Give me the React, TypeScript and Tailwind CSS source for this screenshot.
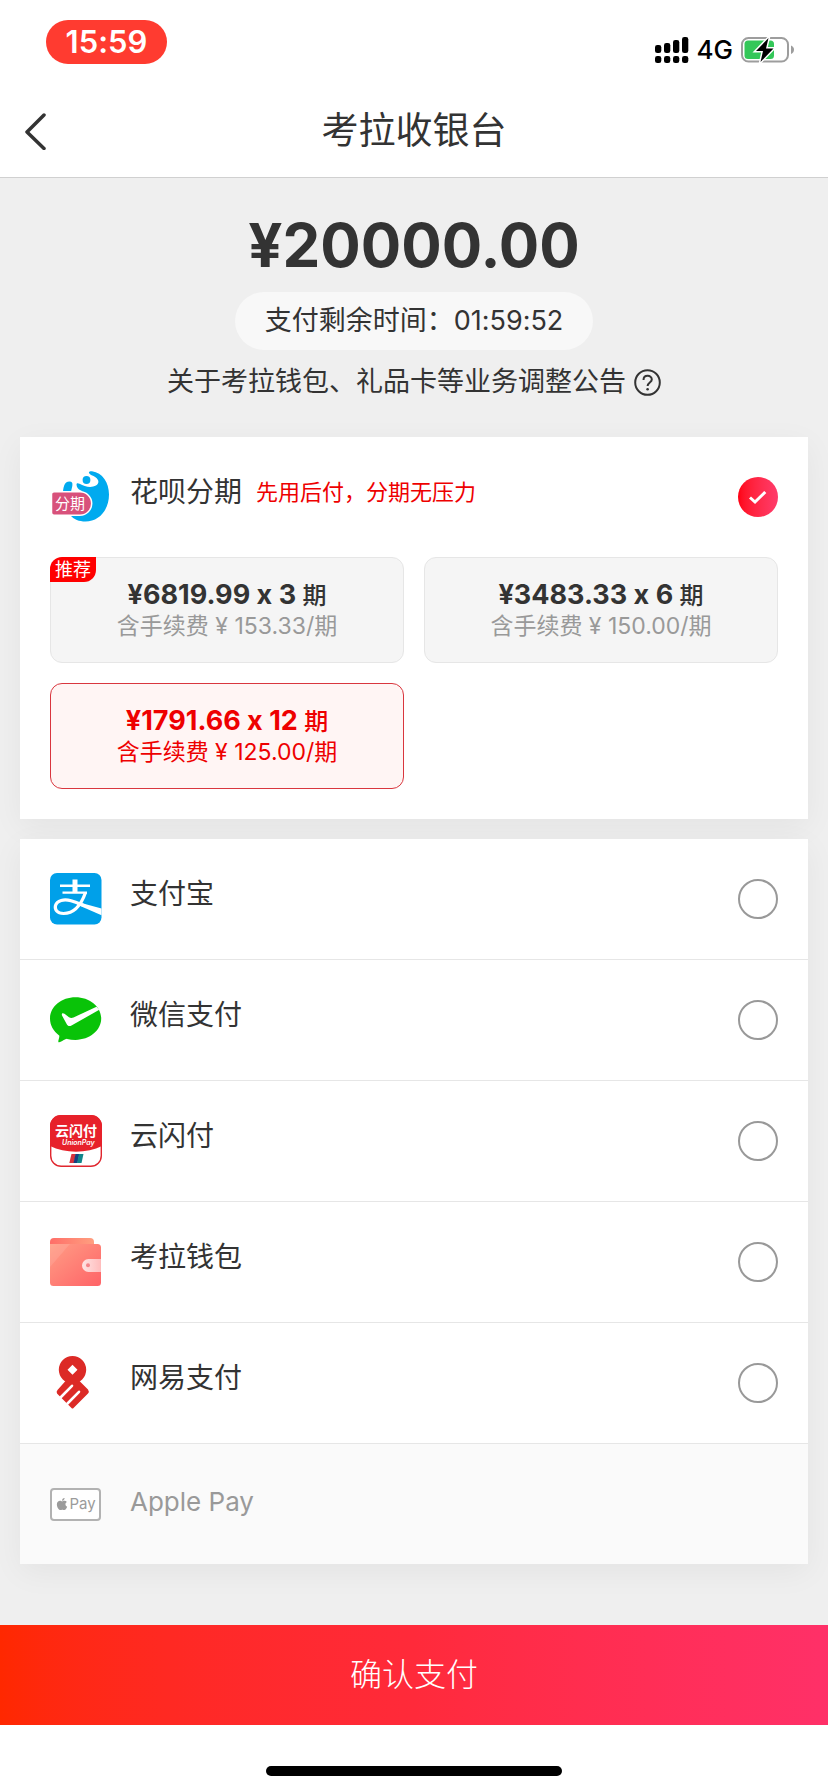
import React, { useState } from 'react'
import { FaApple } from 'react-icons/fa'

const installments = [
  { id: '3', price: '¥6819.99', count: 3, fee: '153.33', recommended: true },
  { id: '6', price: '¥3483.33', count: 6, fee: '150.00', recommended: false },
  { id: '12', price: '¥1791.66', count: 12, fee: '125.00', recommended: false }
]

const methods = [
  { id: 'alipay', name: '支付宝', icon: <AlipayIcon /> },
  { id: 'wechat', name: '微信支付', icon: <WechatIcon /> },
  { id: 'unionpay', name: '云闪付', icon: <UnionPayIcon /> },
  { id: 'kaola', name: '考拉钱包', icon: <WalletIcon /> },
  { id: 'netease', name: '网易支付', icon: <NeteaseIcon /> }
]

function SignalIcon() {
  return (
    <svg width="34" height="28" viewBox="0 0 34 28" aria-hidden="true">
      <rect x="0" y="9" width="6.300" height="8" rx="2.300" />
      <rect x="9" y="7" width="6.300" height="10" rx="2.300" />
      <rect x="18" y="4" width="6.300" height="13" rx="2.300" />
      <rect x="27" y="1" width="6.300" height="16" rx="2.300" />
      <rect x="0" y="20" width="6.300" height="7" rx="2.300" />
      <rect x="9" y="20" width="6.300" height="7" rx="2.300" />
      <rect x="18" y="20" width="6.300" height="7" rx="2.300" />
      <rect x="27" y="20" width="6.300" height="7" rx="2.300" />
    </svg>
  )
}

function BatteryIcon() {
  return (
    <svg width="54" height="28" viewBox="0 0 54 28" aria-hidden="true">
      <rect x="1" y="2" width="46" height="23.5" rx="6.5" fill="none" stroke="#9d9d9d" strokeWidth="2" />
      <path d="M50 9.500c2 .8 3 2.300 3 4.200s-1 3.400-3 4.200z" fill="#9d9d9d" />
      <rect x="3.500" y="4.500" width="29.500" height="18.500" rx="3.500" fill="#34c759" />
      <path
        d="M27.500 2L15 15H22L19.500 26L32.500 12.500H25z"
        fill="#000"
        stroke="#fff"
        strokeWidth="3"
        paintOrder="stroke"
      />
    </svg>
  )
}

function HuabeiIcon() {
  return (
    <svg width="60" height="52" viewBox="0 0 60 52" aria-hidden="true">
      <path
        d="M39 2C38.500.5 40.500 0 42 .2C52.500 1.500 59 11.500 59 23.500C59 39 49 50.500 35.500 50.500C29 50.500 24 48.500 20 44L30 22C32.500 21.500 33 20 31 19.500C28 18.500 26.500 15.500 26.500 13.500C26.500 12 28 12 29.500 12.800C35 16 41.500 17 46 14.500C49.500 12.500 49 8.500 45.500 6.200C43 4.500 39.800 4 39 2z"
        fill="#00aaef"
      />
      <circle cx="36.500" cy="9" r="3.900" fill="#00aaef" />
      <path d="M13 23C13 17 14 10.500 19.500 10.500C24.500 10.500 22 16 20.500 23z" fill="#00aaef" />
      <path
        d="M4 20.800H30A11.700 11.700 0 0 1 30 44.200H4A2.500 2.500 0 0 1 1.500 41.700V23.300A2.500 2.500 0 0 1 4 20.800z"
        fill="#d8517b"
        stroke="#fff"
        strokeWidth="1.500"
      />
      <text x="5" y="38" fontSize="15" fill="#fff" className="font-['Noto_Sans_CJK_SC',sans-serif] font-normal">
        分期
      </text>
    </svg>
  )
}

function AlipayIcon() {
  return (
    <svg width="52" height="52" viewBox="0 0 52 52" aria-hidden="true">
      <rect width="51.500" height="51.500" rx="7" fill="#00a0e9" />
      <g fill="none" stroke="#fff">
        <path d="M10 12.800H40M12.500 19.600H37" strokeWidth="2.400" />
        <path d="M25 6.500V20" strokeWidth="5" />
        <path
          d="M35.500 19.500C32 29.500 25 40.500 13.500 40.500C7 40.500 4.500 36.500 5.500 32.500C7 27.500 14 25.500 21 27.800C27 29.700 31 31.500 35 33"
          strokeWidth="3.200"
        />
      </g>
      <path d="M24 28L51.500 35.500V42.300L28 32z" fill="#fff" />
    </svg>
  )
}

function WechatIcon() {
  return (
    <svg width="52" height="46" viewBox="0 0 52 46" aria-hidden="true">
      <path
        d="M25.500.3C39.700.3 51.200 9.800 51.200 21.600S39.700 42.900 25.500 42.900C22.500 42.900 19.800 42.600 17.200 41.900C15.500 41.500 12 45 9 45.300C7 45.300 10 40 9.200 38.400C3.500 34.500 0 28.500 0 21.600C0 9.800 11.300.3 25.500.3z"
        fill="#09c308"
      />
      <path
        d="M12 18.500C11.300 16.300 12.800 15.500 14.500 16.800L19 20.200C20.500 21.200 21.800 21.200 23.500 20.500L46.500 9.800L49.300 12.800L21.500 28.500C19.500 29.600 17.700 29.200 16.800 27.300z"
        fill="#fff"
      />
    </svg>
  )
}

function UnionPayIcon() {
  return (
    <svg width="52" height="52" viewBox="0 0 52 52" aria-hidden="true">
      <rect x=".7" y=".7" width="50.600" height="50.600" rx="10.500" fill="#fff" stroke="#e0262e" strokeWidth="1.400" />
      <path d="M0 31V11A11 11 0 0 1 11 0H41A11 11 0 0 1 52 11V31C37 38.500 15 38.500 0 31z" fill="#e7212a" />
      <text x="5" y="20.500" fontSize="14" fill="#fff" className="font-['Noto_Sans_CJK_SC',sans-serif] font-bold">
        云闪付
      </text>
      <text x="12" y="30" fontSize="7" fill="#fff" className="font-['Inter',sans-serif] font-semibold italic">
        UnionPay
      </text>
      <path d="M21.500 39H26L24 48H19.300z" fill="#d8323c" />
      <path d="M25.500 39H29.500L27.500 48H23.500z" fill="#17407f" />
      <path d="M29 39H33.500L31.500 48H27z" fill="#11858a" />
    </svg>
  )
}

function WalletIcon() {
  return (
    <svg width="52" height="48" viewBox="0 0 52 48" aria-hidden="true">
      <defs>
        <linearGradient id="walletBack" x1="0" y1="0" x2="1" y2="0">
          <stop offset="0" stopColor="#ff6e68" />
          <stop offset="1" stopColor="#ff9f80" />
        </linearGradient>
        <linearGradient id="walletFront" x1="0" y1="0" x2="1" y2="1">
          <stop offset="0" stopColor="#ff9d85" />
          <stop offset="1" stopColor="#ff6367" />
        </linearGradient>
        <linearGradient id="walletClasp" x1="0" y1="0" x2="1" y2="0">
          <stop offset="0" stopColor="#ffe3e3" />
          <stop offset="1" stopColor="#ffbcbc" />
        </linearGradient>
      </defs>
      <rect width="44" height="14" rx="4" fill="url(#walletBack)" />
      <path d="M0 6H47.500A3.500 3.500 0 0 1 51 9.500V44.500A3.500 3.500 0 0 1 47.500 48H3.500A3.500 3.500 0 0 1 0 44.500z" fill="url(#walletFront)" />
      <path d="M0 6H20L0 29z" fill="#fff" opacity=".1" />
      <path d="M51 21H38.500a6.500 6.500 0 0 0 0 13H51z" fill="url(#walletClasp)" />
      <circle cx="38" cy="27.300" r="2" fill="#f5858a" />
    </svg>
  )
}

function NeteaseIcon() {
  return (
    <svg width="52" height="54" viewBox="0 0 52 54" aria-hidden="true">
      <path
        d="M22.500 0a13.700 13.700 0 1 1 0 27.400a13.700 13.700 0 0 1 0-27.400zM22.500 8.800L17.500 13.800L22.500 18.800L27.500 13.800z"
        fill="#dc2a26"
        fillRule="evenodd"
      />
      {/* solid ribbon, the two slits are cut on top */}
      <path
        d="M15.500 25H29.500L38 33.500Q39.500 35.500 38 37.500L23.500 52Q22.500 53 21.500 52L7 37.500Q6 35.500 7.500 34z"
        fill="#dc2a26"
      />
      <path d="M10.500 41.500L22 29.800M17.500 47.500L29 35.800" stroke="#fff" strokeWidth="2.600" strokeLinecap="round" />
    </svg>
  )
}

function ApplePayIcon() {
  return (
    <span className="flex h-[33px] w-[51px] items-center justify-center rounded border-2 border-[#b2b2b2] bg-white text-[#9b9b9b]">
      <FaApple size={14} aria-hidden="true" />
      <span className="text-[15px] leading-5">Pay</span>
    </span>
  )
}

function PayRadio({ id, checked, onChange }: { id: string; checked: boolean; onChange: () => void }) {
  return (
    <span className="relative flex size-10 shrink-0">
      <input
        type="radio"
        id={id}
        name="payment"
        checked={checked}
        onChange={onChange}
        className="size-10 appearance-none rounded-full border-2 border-[#999] checked:border-0 checked:bg-linear-to-r checked:from-[#ff0012] checked:to-[#ff3b6b]"
      />
      {checked && (
        <svg className="pointer-events-none absolute inset-0" width="40" height="40" viewBox="0 0 40 40" aria-hidden="true">
          <path d="M12 20.500L17 25L27.300 15" fill="none" stroke="#fff" strokeWidth="3" />
        </svg>
      )}
    </span>
  )
}

export default function App() {
  const [method, setMethod] = useState('huabei')
  const [plan, setPlan] = useState('12')

  return (
    <div className="flex min-h-screen flex-col bg-white font-['Inter','Noto_Sans_CJK_SC',sans-serif] text-[#333] [font-feature-settings:'calt'_0]">
      {/* Status bar */}
      <div className="flex h-[84px] items-start justify-between pt-5 pr-[33px] pl-[46px] text-black">
        <div className="flex h-11 w-[121px] items-center justify-center rounded-full bg-[#ff3b30] text-[31px] font-semibold text-white">
          15:59
        </div>
        <div className="flex items-center gap-2 pt-[14px]">
          <SignalIcon />
          <span className="text-[26px] leading-8 font-medium">4G</span>
          <BatteryIcon />
        </div>
      </div>

      {/* Nav bar */}
      <header className="relative flex h-[94px] items-center justify-center border-b border-[#d0d0d0]">
        <button type="button" aria-label="返回" className="absolute left-6">
          <svg width="24" height="38" viewBox="0 0 24 38" aria-hidden="true">
            <path d="M20 3L3 20L20 36.500" fill="none" stroke="#333" strokeWidth="3.500" strokeLinecap="round" strokeLinejoin="round" />
          </svg>
        </button>
        <h1 className="text-[37px] font-normal">考拉收银台</h1>
      </header>

      <main className="flex-1 bg-[#efefef] px-5 pt-[31px]">
        {/* Amount */}
        <div className="flex flex-col items-center">
          <div className="text-[60px] leading-[72px] font-bold">¥20000.00</div>
          <div className="mt-[11px] flex h-[58px] items-center rounded-full bg-[#f8f8f8] px-[30px] text-[27px] leading-9">
            支付剩余时间：<time>01:59:52</time>
          </div>
          <a href="#notice" className="mt-[14px] flex items-center gap-2 text-[27px] leading-9">
            关于考拉钱包、礼品卡等业务调整公告
            <svg width="27" height="27" viewBox="0 0 27 27" fill="none" stroke="#333" strokeWidth="2" aria-hidden="true">
              <circle cx="13.500" cy="13.500" r="12.300" />
              <path d="M9.500 11C9.500 5.500 17.800 5.600 17.800 10.500C17.800 13.500 13.600 13.500 13.600 17" />
              <circle cx="13.600" cy="20.300" r="1.300" fill="#333" stroke="none" />
            </svg>
          </a>
        </div>

        {/* Installments */}
        <section className="mt-[37px] bg-white px-[30px] pb-[30px] shadow-[0_8px_30px_rgba(0,0,0,0.05)]">
          <label htmlFor="huabei" className="flex h-[120px] items-center">
            <span className="w-20">
              <HuabeiIcon />
            </span>
            <span className="flex flex-1 items-center gap-[14px] pb-[10px]">
              <span className="text-[28px]">花呗分期</span>
              <span className="text-[22px] text-[#e00]">先用后付，分期无压力</span>
            </span>
            <PayRadio id="huabei" checked={method === 'huabei'} onChange={() => setMethod('huabei')} />
          </label>
          <div className="grid grid-cols-2 gap-5">
            {installments.map((item) => (
              <button
                key={item.id}
                type="button"
                aria-pressed={plan === item.id}
                onClick={() => setPlan(item.id)}
                className="relative h-[106px] rounded-xl border border-[#e6e6e6] bg-[#f5f5f5] text-[#999] aria-pressed:border-[#d9363e] aria-pressed:bg-[#fff5f4] aria-pressed:text-[#e00]"
              >
                {item.recommended && (
                  <span className="absolute -top-px -left-px rounded-tl-xl rounded-br-xl bg-[#f00] px-[5px] text-lg leading-[25px] text-white">
                    推荐
                  </span>
                )}
                <span className={plan === item.id ? 'block text-[27px] leading-[30px] font-bold' : 'block text-[27px] leading-[30px] font-bold text-[#333]'}>
                  {item.price} x {item.count} <span className="text-2xl leading-[30px] font-medium">期</span>
                </span>
                <span className="block text-[23px] leading-[30px]">含手续费 ¥ {item.fee}/期</span>
              </button>
            ))}
          </div>
        </section>

        {/* Other methods */}
        <section className="mt-5 mb-[60px] bg-white shadow-[0_8px_30px_rgba(0,0,0,0.05)]">
          {methods.map((item) => (
            <label key={item.id} htmlFor={item.id} className="flex h-[121px] items-center border-b border-[#e6e6e6] px-[30px]">
              <span className="w-20">{item.icon}</span>
              <span className="flex-1 pb-[10px] text-[28px]">{item.name}</span>
              <PayRadio id={item.id} checked={method === item.id} onChange={() => setMethod(item.id)} />
            </label>
          ))}
          <div className="flex h-[120px] items-center bg-[#fafafa] px-[30px] text-[#999]">
            <span className="w-20">
              <ApplePayIcon />
            </span>
            <span className="flex-1 pb-[6px] text-[26px]">Apple Pay</span>
          </div>
        </section>
      </main>

      {/* Confirm */}
      <footer>
        <button type="button" className="h-[100px] w-full bg-linear-to-r from-[#ff2800] via-[#ff2a3a] to-[#ff3068] text-[32px] font-light text-white">
          确认支付
        </button>
        <div className="flex h-[67px] items-end justify-center pb-4">
          <div className="h-[10px] w-[296px] rounded-full bg-black" />
        </div>
      </footer>
    </div>
  )
}
